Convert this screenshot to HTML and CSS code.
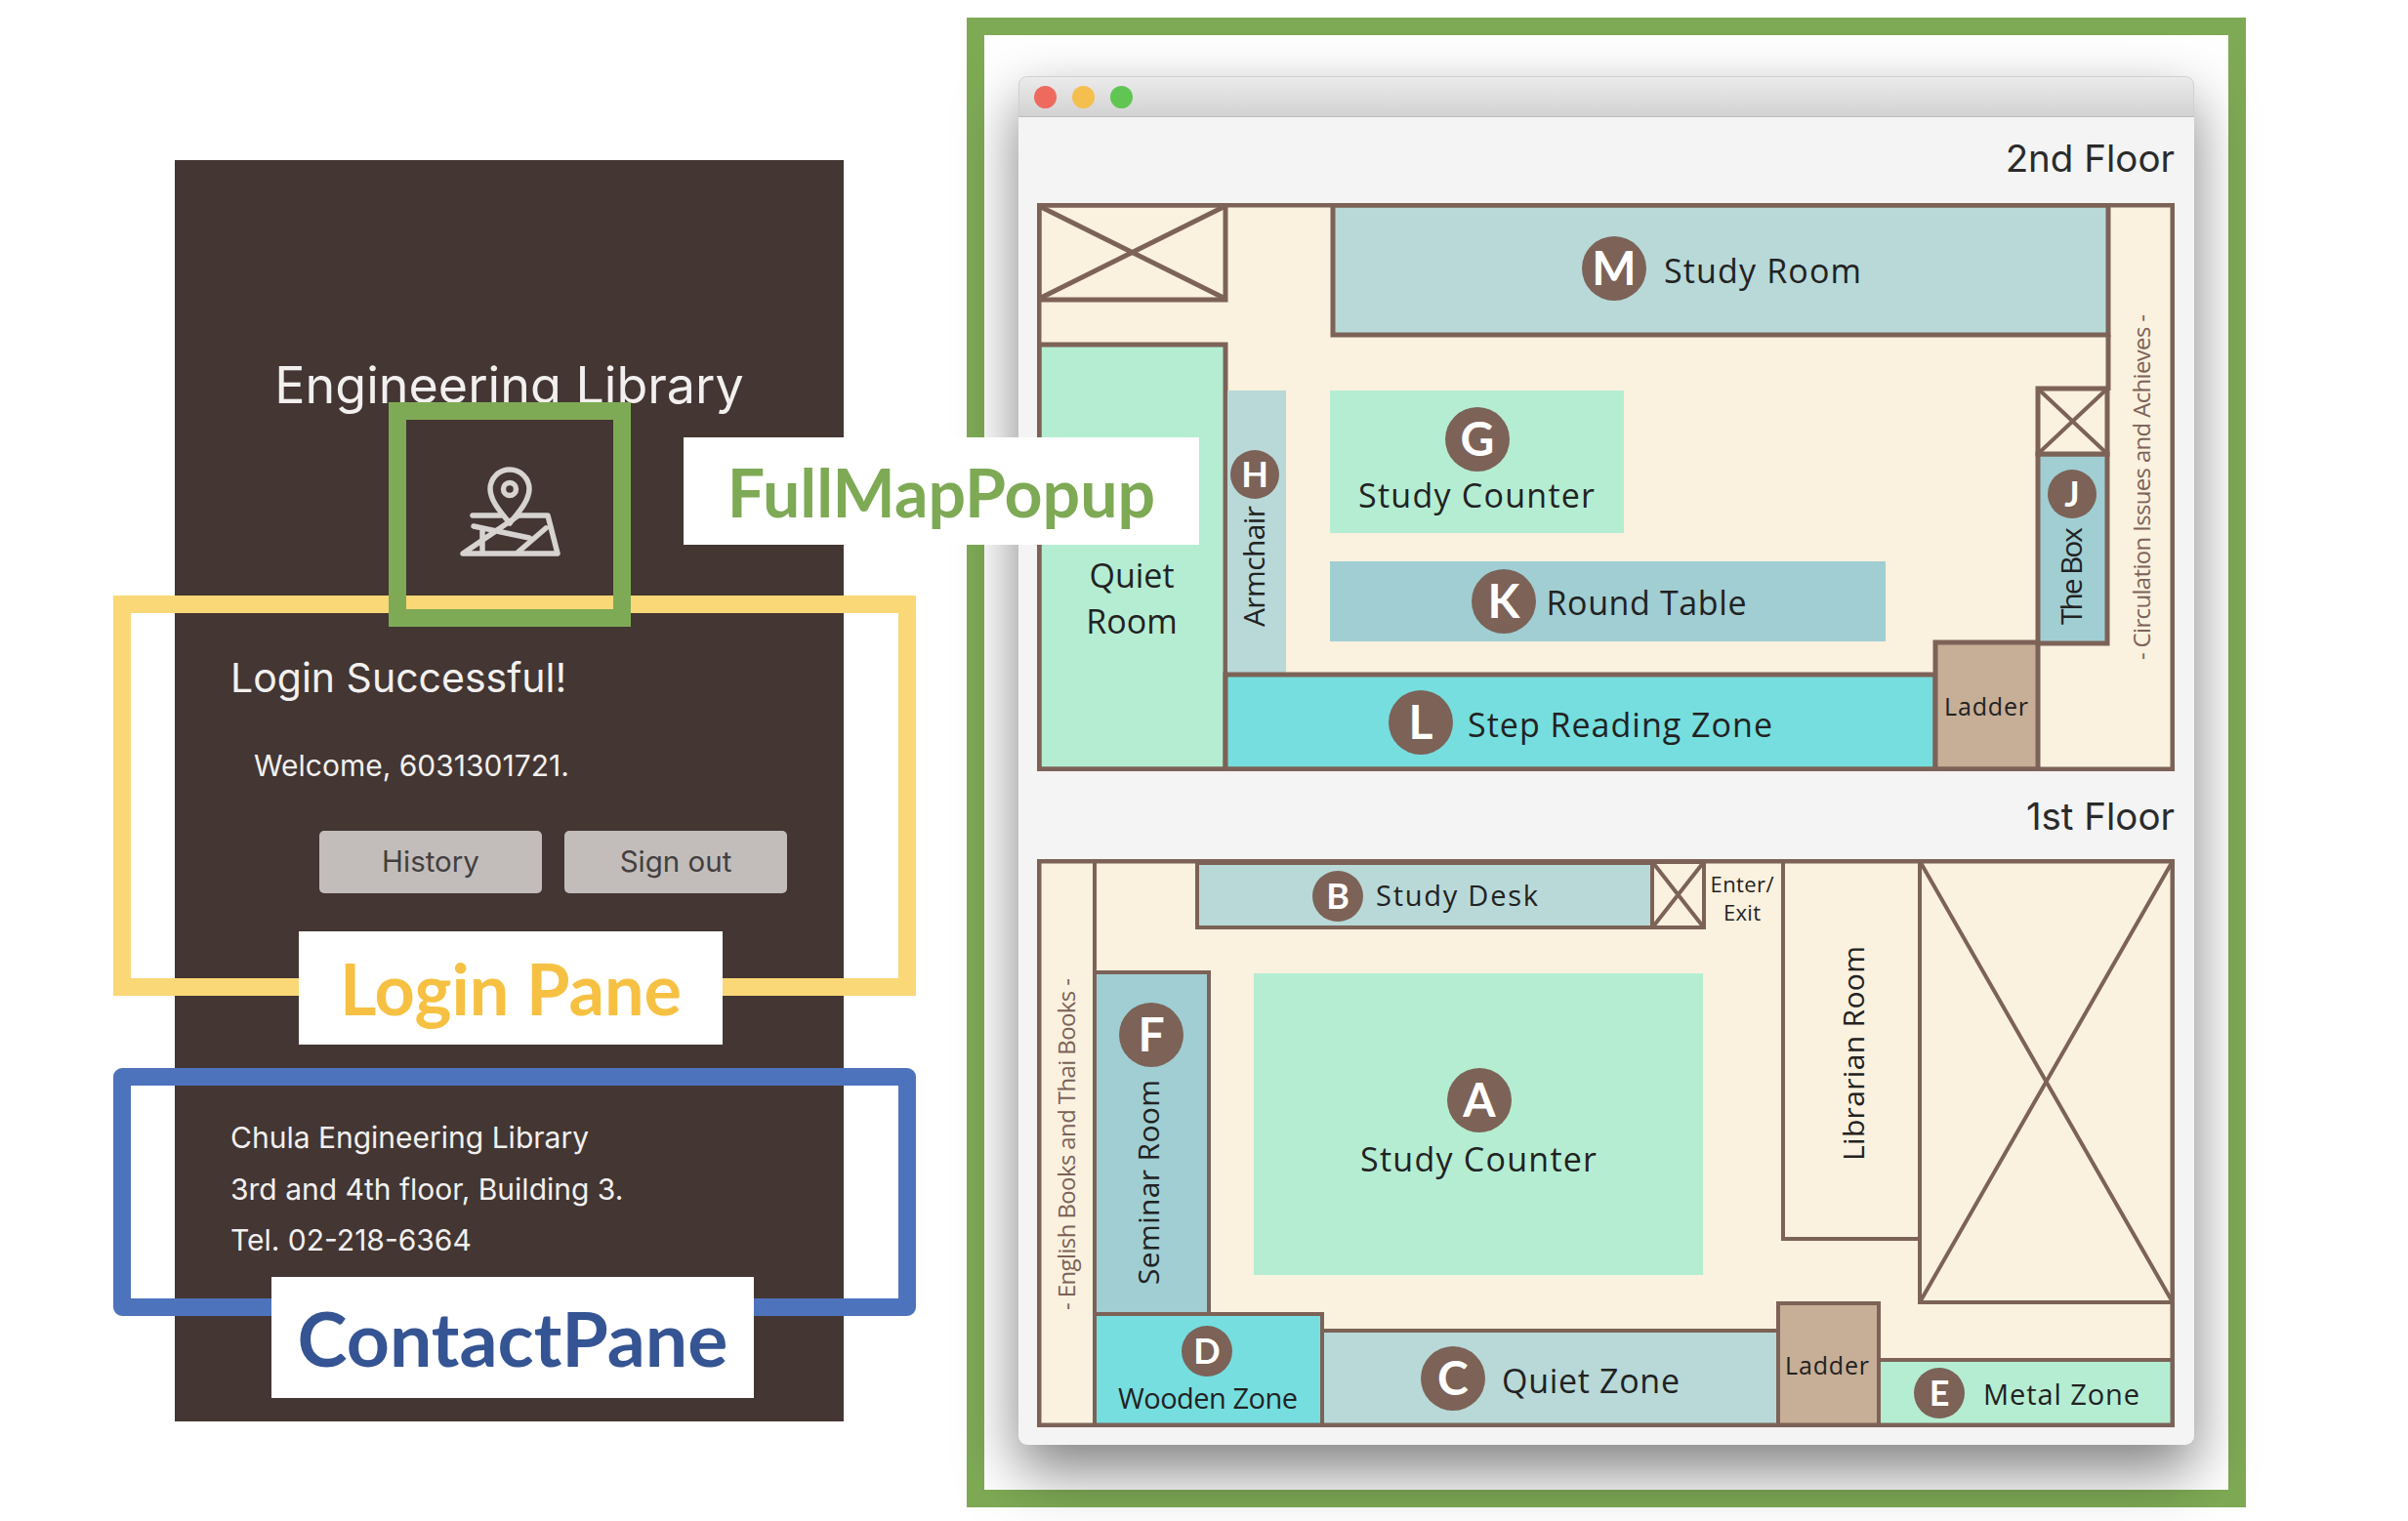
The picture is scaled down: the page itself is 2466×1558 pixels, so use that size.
FILE: index.html
```html
<!DOCTYPE html>
<html>
<head>
    <meta charset="utf-8">
    <title>Engineering Library panes</title>
    <link rel="stylesheet" href="styles.css">
</head>
<body>
<div class="figure">
    <div class="phone">
        <h1 class="phone-title">Engineering Library</h1>
        <div class="map-icon">
            <svg viewBox="0 0 104 92" width="104" height="92">
                <path d="M14 50H43M61 50H91L101 89H4ZM15 61L72 73M89 63L60 88M24 65V88"/>
                <path d="M52 58C46 50 32 36 32 23a20 20 0 0 1 40 0C72 36 58 50 52 58Z"/>
                <circle cx="52" cy="23" r="6.5"/>
            </svg>
        </div>
        <h2 class="login-title">Login Successful!</h2>
        <p class="welcome">Welcome, 6031301721.</p>
        <div class="login-buttons">
            <button class="phone-button">History</button>
            <button class="phone-button">Sign out</button>
        </div>
        <div class="contact">
            <p>Chula Engineering Library</p>
            <p>3rd and 4th floor, Building 3.</p>
            <p>Tel. 02-218-6364</p>
        </div>
    </div>

    <div class="map-frame">
        <div class="window">
            <div class="titlebar">
                <span class="light red"></span>
                <span class="light yellow"></span>
                <span class="light green"></span>
            </div>
            <div class="window-body">
                <div class="floor-name">2nd Floor</div>
                <svg class="floor-map" viewBox="0 0 1165 582" width="1165" height="582">
                    <rect class="cream" x="2" y="2" width="1161" height="578"/>
                    <rect class="teal wall" x="303" y="2" width="794" height="133"/>
                    <rect class="cream wall" x="2" y="2" width="191" height="97"/>
                    <path class="cross heavy" d="M4 4L191 97M191 4L4 97"/>
                    <rect class="mint wall" x="2" y="145" width="191" height="435"/>
                    <rect class="teal" x="195" y="192" width="60" height="290"/>
                    <rect class="mint" x="300" y="192" width="301" height="146"/>
                    <rect class="blue" x="300" y="367" width="569" height="82"/>
                    <rect class="cyan wall" x="193" y="483" width="727" height="97"/>
                    <rect class="tan wall" x="920" y="450" width="105" height="130"/>
                    <path class="wall" d="M1097 135V192"/>
                    <rect class="blue wall" x="1025" y="257" width="71" height="194"/>
                    <rect class="cream wall" x="1025" y="190" width="71" height="67"/>
                    <path class="cross" d="M1027 192L1094 255M1094 192L1027 255"/>
                    <rect class="wall no-fill" x="2" y="2" width="1161" height="578"/>

                    <circle class="pin" cx="591" cy="67" r="33"/>
                    <text class="pin-letter" x="591" y="84">M</text>
                    <circle class="pin" cx="451" cy="242" r="33"/>
                    <text class="pin-letter" x="451" y="259">G</text>
                    <circle class="pin" cx="223" cy="278" r="25"/>
                    <text class="pin-letter small" x="223" y="291">H</text>
                    <circle class="pin" cx="478" cy="408" r="33"/>
                    <text class="pin-letter" x="478" y="425">K</text>
                    <circle class="pin" cx="393" cy="532" r="33"/>
                    <text class="pin-letter" x="393" y="549">L</text>
                    <circle class="pin" cx="1060" cy="298" r="25"/>
                    <text class="pin-letter small" x="1060" y="311">J</text>

                    <text class="room" x="743" y="82" textLength="202">Study Room</text>
                    <text class="room" x="450" y="312" textLength="242">Study Counter</text>
                    <text class="room" x="97" y="394">Quiet</text>
                    <text class="room" x="97" y="441">Room</text>
                    <text class="room" x="624" y="422" textLength="205">Round Table</text>
                    <text class="room" x="597" y="547" textLength="312">Step Reading Zone</text>
                    <text class="room tiny" x="972" y="525" textLength="86">Ladder</text>
                    <text class="room side" transform="translate(233 372) rotate(-90)" textLength="124">Armchair</text>
                    <text class="room side" transform="translate(1070 382) rotate(-90)" textLength="100">The Box</text>
                    <text class="room shelf" transform="translate(1140 291) rotate(-90)" textLength="354">- Circulation Issues and Achieves -</text>
                </svg>

                <div class="floor-name">1st Floor</div>
                <svg class="floor-map" viewBox="0 0 1165 582" width="1165" height="582">
                    <rect class="cream" x="2" y="2" width="1161" height="578"/>
                    <path class="wall thin" d="M59 2V580"/>
                    <rect class="teal wall thin" x="164" y="4" width="466" height="66"/>
                    <rect class="cream wall thin" x="630" y="3" width="53" height="67"/>
                    <path class="cross" d="M631 4L682 69M682 4L631 69"/>
                    <rect class="cream wall thin" x="764" y="2" width="140" height="387"/>
                    <rect class="cream wall thin" x="904" y="2" width="259" height="452"/>
                    <path class="cross" d="M904 2L1163 454M1163 2L904 454"/>
                    <rect class="mint" x="222" y="117" width="460" height="309"/>
                    <rect class="blue wall thin" x="59" y="116" width="117" height="350"/>
                    <rect class="teal wall thin" x="292" y="483" width="467" height="97"/>
                    <rect class="cyan wall thin" x="59" y="466" width="233" height="114"/>
                    <rect class="mint wall thin" x="862" y="513" width="301" height="67"/>
                    <rect class="tan wall thin" x="759" y="455" width="103" height="125"/>
                    <rect class="wall no-fill" x="2" y="2" width="1161" height="578"/>

                    <circle class="pin" cx="453" cy="247" r="33"/>
                    <text class="pin-letter" x="453" y="264">A</text>
                    <circle class="pin" cx="308" cy="38" r="26"/>
                    <text class="pin-letter small" x="308" y="51">B</text>
                    <circle class="pin" cx="426" cy="532" r="33"/>
                    <text class="pin-letter" x="426" y="549">C</text>
                    <circle class="pin" cx="174" cy="504" r="26"/>
                    <text class="pin-letter small" x="174" y="517">D</text>
                    <circle class="pin" cx="924" cy="547" r="26"/>
                    <text class="pin-letter small" x="924" y="560">E</text>
                    <circle class="pin" cx="117" cy="180" r="33"/>
                    <text class="pin-letter" x="117" y="197">F</text>

                    <text class="room" x="452" y="320" textLength="242">Study Counter</text>
                    <text class="room small" x="430" y="48" textLength="166">Study Desk</text>
                    <text class="room" x="567" y="547" textLength="182">Quiet Zone</text>
                    <text class="room small" x="175" y="563" textLength="184">Wooden Zone</text>
                    <text class="room small" x="1049" y="559" textLength="160">Metal Zone</text>
                    <text class="room tiny" x="809" y="528" textLength="86">Ladder</text>
                    <text class="room mini" x="722" y="34" textLength="65">Enter/</text>
                    <text class="room mini" x="722" y="63" textLength="38">Exit</text>
                    <text class="room side" transform="translate(125 331) rotate(-90)" textLength="210">Seminar Room</text>
                    <text class="room side" transform="translate(847 199) rotate(-90)" textLength="220">Librarian Room</text>
                    <text class="room shelf" transform="translate(39 292) rotate(-90)" textLength="340">- English Books and Thai Books -</text>
                </svg>
            </div>
        </div>
    </div>

    <!-- annotation frames drawn over the screenshots -->
    <div class="outline login-outline"></div>
    <div class="outline contact-outline"></div>
    <div class="outline icon-outline"></div>
    <div class="caption login-caption">Login Pane</div>
    <div class="caption contact-caption">ContactPane</div>
    <div class="caption popup-caption">FullMapPopup</div>
</div>
</body>
</html>
```

FILE: styles.css
```css
body {
    margin: 0;
    background-color: #fff;
    font-family: Inter, "Liberation Sans", sans-serif;
}

.figure {
    position: relative;
    display: flex;
    align-items: flex-start;
    width: 2466px;
    height: 1558px;
    overflow: hidden;
}

/* left: phone screenshot */
.phone {
    box-sizing: border-box;
    width: 685px;
    height: 1292px;
    margin: 164px 0 0 179px;
    padding-top: 201px;
    background-color: #433633;
    color: #f2f0ef;
}

.phone-title {
    margin: 0;
    font-size: 52px;
    font-weight: 400;
    line-height: 60px;
    text-align: center;
}

.map-icon {
    display: flex;
    justify-content: center;
    margin-top: 53px;
}

.map-icon svg {
    display: block;
    fill: none;
    stroke: #d6d3d1;
    stroke-width: 5.5;
    stroke-linejoin: round;
    stroke-linecap: round;
}

.login-title {
    margin: 100px 0 0 57px;
    font-size: 41px;
    font-weight: 400;
    line-height: 48px;
}

.welcome {
    margin: 48px 0 0 81px;
    font-size: 30px;
    line-height: 36px;
}

.login-buttons {
    display: flex;
    justify-content: flex-end;
    gap: 23px;
    margin-top: 49px;
    padding-right: 58px;
}

.phone-button {
    width: 228px;
    height: 64px;
    padding-bottom: 3px;
    border: none;
    border-radius: 5px;
    background-color: #c2bdbb;
    color: #433f3e;
    font-family: inherit;
    font-size: 29.5px;
}

.contact {
    margin: 224px 0 0 57px;
    font-size: 30px;
    line-height: 52.5px;
}

.contact p {
    margin: 0;
}

/* right: full map window */
.map-frame {
    box-sizing: border-box;
    width: 1310px;
    height: 1526px;
    margin: 18px 0 0 126px;
    padding: 42px 35px 0;
    border: 18px solid #7faa55;
}

.window {
    width: 1204px;
    height: 1402px;
    border-radius: 9px;
    background-color: #f4f4f4;
    box-shadow: 0 26px 60px rgba(0, 0, 0, 0.5);
}

.titlebar {
    box-sizing: border-box;
    display: flex;
    align-items: center;
    gap: 16px;
    height: 42px;
    padding: 0 15px;
    border: 1px solid #d0d0d0;
    border-bottom-color: #bcbcbc;
    border-radius: 9px 9px 0 0;
    background-image: linear-gradient(to bottom, #ebebeb, #d2d2d2);
}

.light {
    width: 23px;
    height: 23px;
    border-radius: 50%;
}

.light.red { background-color: #ee6a5f; }
.light.yellow { background-color: #f5bf4f; }
.light.green { background-color: #61c554; }

.window-body {
    padding: 0 20px 0 19px;
}

.floor-name {
    height: 88px;
    font-size: 38.5px;
    line-height: 85px;
    text-align: right;
    color: #2b2b2b;
}

.floor-map {
    display: block;
}

.floor-map + .floor-name {
    height: 90px;
    line-height: 92px;
}

.cream { fill: #faf1df; }
.teal { fill: #b8d9d8; }
.mint { fill: #b5edd3; }
.blue { fill: #a0ced3; }
.cyan { fill: #76dede; }
.tan { fill: #c7ae96; }

.no-fill { fill: none; }

.wall {
    stroke: #7c6257;
    stroke-width: 5;
}

.wall.thin {
    stroke-width: 4;
}

.cross {
    fill: none;
    stroke: #7c6257;
    stroke-width: 4;
}

.cross.heavy {
    stroke-width: 5;
}

.pin {
    fill: #7c6257;
}

.pin-letter {
    fill: #fff;
    font-family: Lato, sans-serif;
    font-size: 48px;
    font-weight: 700;
    text-anchor: middle;
}

.pin-letter.small {
    font-size: 36px;
}

.room {
    fill: #222;
    font-family: "Open Sans", sans-serif;
    font-size: 34px;
    text-anchor: middle;
}

.room.small { font-size: 29px; }
.room.tiny { font-size: 25px; }
.room.mini { font-size: 22px; }
.room.side { font-size: 30px; }

.room.shelf {
    fill: #7c6257;
    font-size: 24px;
}

/* annotations */
.outline {
    position: absolute;
    box-sizing: border-box;
    border: 18px solid;
}

.login-outline {
    left: 116px;
    top: 610px;
    width: 822px;
    height: 410px;
    border-color: #fad877;
}

.contact-outline {
    left: 116px;
    top: 1094px;
    width: 822px;
    height: 254px;
    border-color: #4e73bd;
    border-radius: 9px;
}

.icon-outline {
    left: 398px;
    top: 412px;
    width: 248px;
    height: 230px;
    border-color: #7faa55;
}

.caption {
    position: absolute;
    display: flex;
    align-items: center;
    justify-content: center;
    background-color: #fff;
    font-family: Lato, sans-serif;
    font-weight: 700;
}

.login-caption {
    left: 306px;
    top: 954px;
    width: 434px;
    height: 116px;
    color: #f6c142;
    font-size: 72px;
}

.contact-caption {
    left: 278px;
    top: 1308px;
    width: 494px;
    height: 124px;
    color: #355493;
    font-size: 77px;
}

.popup-caption {
    left: 700px;
    top: 448px;
    width: 528px;
    height: 110px;
    color: #7ea955;
    font-size: 68px;
}
```
